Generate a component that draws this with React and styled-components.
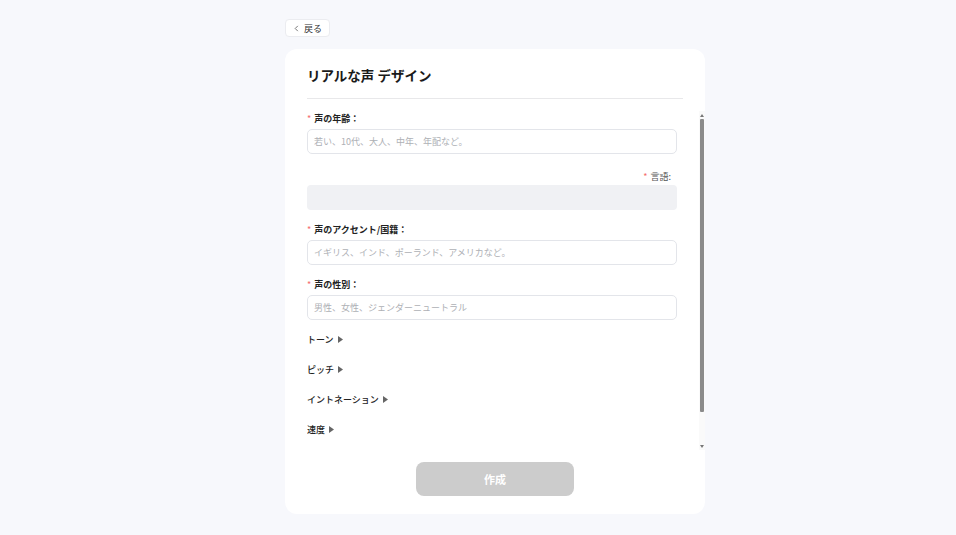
import React from 'react'
import styled, { createGlobalStyle } from 'styled-components';

const GlobalStyle = createGlobalStyle`
  html, body {
    margin: 0;
    padding: 0;
    background: #f7f8fc;
    font-family: "Noto Sans CJK JP", "Noto Sans", sans-serif;
  }
  * { box-sizing: border-box; }
`

const Page = styled.div`
  width: 420px;
  margin-left: 285px;
  padding-top: 19px;
`

const BackButton = styled.button`
  display: flex;
  align-items: center;
  gap: 4px;
  height: 18px;
  padding: 0 7px;
  background: #fff;
  border: 1px solid #ebecf0;
  border-radius: 4px;
  font-family: inherit;
  font-size: 9px;
  color: #333;
  cursor: pointer;
  svg { width: 7px; height: 7px; }
`

const Card = styled.div`
  margin-top: 12px;
  height: 465px;
  background: #fff;
  border-radius: 12px;
  display: flex;
  flex-direction: column;
`

const Header = styled.div`
  margin: 0 22px;
  padding: 18px 0 15px;
  border-bottom: 1px solid #e8e8ea;
`

const Title = styled.h1`
  margin: 0;
  font-size: 13.5px;
  line-height: 16px;
  font-weight: 700;
  color: #1a1a1a;
`

const ScrollRow = styled.div`
  display: flex;
  margin: 12px 0 0 22px;
  height: 339px;
`

const Viewport = styled.div`
  flex: 1;
  overflow: hidden;
  padding-right: 22px;
`

const ScrollBar = styled.div`
  width: 6px;
  display: flex;
  flex-direction: column;
  background: #fafafa;
`

const Arrow = styled.div`
  height: 8px;
  display: flex;
  align-items: center;
  justify-content: center;
  svg { width: 4px; height: 3px; }
`

const Track = styled.div`
  flex: 1;
  padding: 0 1px;
`

const Thumb = styled.div`
  height: 293px;
  background: #8b8b8b;
  border-radius: 1px;
`

const Content = styled.div`
  padding-bottom: 49px;
`

const Item = styled.div`
  display: flow-root;
  margin-bottom: 12px;
`

const Label = styled.div`
  display: flex;
  justify-content: ${p => (p.$right ? 'flex-end' : 'flex-start')};
  align-items: center;
  height: 14px;
  margin: ${p => (p.$right ? '3px 6px 2px 0' : '0 0 4px')};
  font-size: 9px;
  font-weight: ${p => (p.$right ? 400 : 700)};
  color: ${p => (p.$right ? '#555' : '#222')};
  &::before {
    content: '*';
    color: #f56c6c;
    margin-right: 3px;
    font-weight: 400;
  }
`

const Input = styled.input`
  display: block;
  width: 100%;
  height: 25px;
  padding: 0 6px;
  border: 1px solid #e3e5ea;
  border-radius: 5px;
  font-family: inherit;
  font-size: 9px;
  color: #333;
  outline: none;
  &::placeholder { color: #aeb0b5; }
`

const GrayBox = styled.div`
  height: 25px;
  background: #f0f1f4;
  border-radius: 4px;
`

const Collapse = styled.div`
  display: flex;
  align-items: center;
  gap: 4px;
  height: 14px;
  margin-bottom: 16px;
  font-size: 9px;
  color: #222;
  font-weight: 500;
  cursor: pointer;
  svg { width: 5px; height: 7px; }
`

const Footer = styled.div`
  display: flex;
  justify-content: center;
  padding: 12px 0 17px;
`

const SubmitButton = styled.button`
  width: 158px;
  height: 34px;
  border: none;
  border-radius: 8px;
  background: #cccccc;
  color: #fff;
  font-family: inherit;
  font-size: 11px;
  font-weight: 700;
`

const Caret = () => (
  <svg viewBox="0 0 5 7"><path d="M0 0L5 3.5L0 7Z" fill="#666" /></svg>
)

const App = () => {
  const sections = ['トーン', 'ピッチ', 'イントネーション', '速度'];

  return (
    <>
      <GlobalStyle />
      <Page>
        <BackButton>
          <svg viewBox="0 0 8 8" fill="none" stroke="#666" strokeWidth="1">
            <path d="M5.5 1L2.5 4L5.5 7" />
          </svg>
          戻る
        </BackButton>
        <Card>
          <Header>
            <Title>リアルな声 デザイン</Title>
          </Header>
          <ScrollRow>
            <Viewport>
              <Content>
                <Item>
                  <Label>声の年齢：</Label>
                  <Input placeholder="若い、10代、大人、中年、年配など。" />
                </Item>
                <Item>
                  <Label $right>言語:</Label>
                  <GrayBox />
                </Item>
                <Item>
                  <Label>声のアクセント/国籍：</Label>
                  <Input placeholder="イギリス、インド、ポーランド、アメリカなど。" />
                </Item>
                <Item>
                  <Label>声の性別：</Label>
                  <Input placeholder="男性、女性、ジェンダーニュートラル" />
                </Item>
                {sections.map(s => (
                  <Collapse key={s}>
                    {s}
                    <Caret />
                  </Collapse>
                ))}
              </Content>
            </Viewport>
            <ScrollBar>
              <Arrow>
                <svg viewBox="0 0 4 3"><path d="M2 0L4 3H0Z" fill="#777" /></svg>
              </Arrow>
              <Track>
                <Thumb />
              </Track>
              <Arrow>
                <svg viewBox="0 0 4 3"><path d="M0 0H4L2 3Z" fill="#777" /></svg>
              </Arrow>
            </ScrollBar>
          </ScrollRow>
          <Footer>
            <SubmitButton>作成</SubmitButton>
          </Footer>
        </Card>
      </Page>
    </>
  )
}

export default App
